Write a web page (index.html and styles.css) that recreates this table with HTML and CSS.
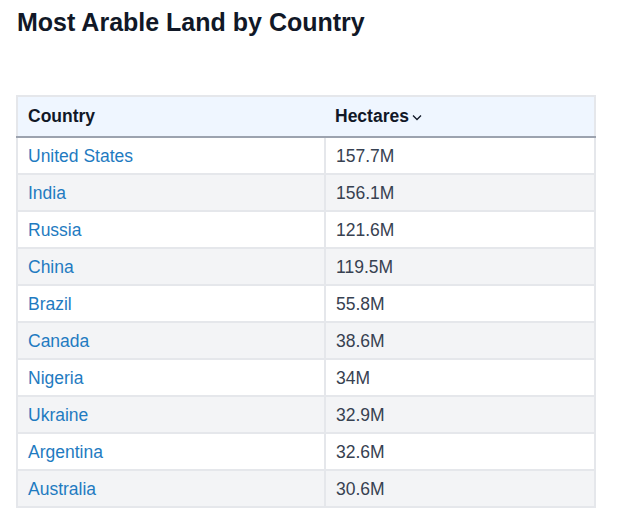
FILE: index.html
```html
<!DOCTYPE html>
<html>
<head>
<meta charset="utf-8">
<link rel="stylesheet" href="styles.css">
</head>
<body>
<div class="page">
  <h1 class="title">Most Arable Land by Country</h1>
  <table class="data">
    <thead>
      <tr>
        <th class="col-country">Country</th>
        <th class="col-value"><span class="sort">Hectares<svg class="chev" width="10" height="7" viewBox="0 0 10 7"><path d="M1 1.5 L5 5.5 L9 1.5" fill="none" stroke="#111827" stroke-width="1.3"/></svg></span></th>
      </tr>
    </thead>
    <tbody>
      <tr><td><a href="#">United States</a></td><td>157.7M</td></tr>
      <tr><td><a href="#">India</a></td><td>156.1M</td></tr>
      <tr><td><a href="#">Russia</a></td><td>121.6M</td></tr>
      <tr><td><a href="#">China</a></td><td>119.5M</td></tr>
      <tr><td><a href="#">Brazil</a></td><td>55.8M</td></tr>
      <tr><td><a href="#">Canada</a></td><td>38.6M</td></tr>
      <tr><td><a href="#">Nigeria</a></td><td>34M</td></tr>
      <tr><td><a href="#">Ukraine</a></td><td>32.9M</td></tr>
      <tr><td><a href="#">Argentina</a></td><td>32.6M</td></tr>
      <tr><td><a href="#">Australia</a></td><td>30.6M</td></tr>
    </tbody>
  </table>
</div>
</body>
</html>
```
FILE: styles.css
```css
html, body { margin: 0; padding: 0; background: #ffffff; }
body { font-family: "Liberation Sans", Arial, sans-serif; color: #374151; }
.page { padding: 6px 16px 0 16px; }
.title {
  margin: 0;
  font-size: 25px;
  line-height: 32px;
  font-weight: 700;
  color: #111827;
  padding-left: 1px;
}
.data {
  margin-top: 57px;
  width: 580px;
  border-collapse: collapse;
  border: 2px solid #e5e7eb;
  font-size: 17.5px;
}
.data th {
  background: #eff6ff;
  text-align: left;
  font-weight: 700;
  color: #111827;
  padding: 10px 10px;
  line-height: 19px;
  border-bottom: 2px solid #9ca3af;
}
.data th.col-country { width: 287px; }
.data td {
  padding: 9px 10px 7px 10px;
  line-height: 19px;
  border: 2px solid #e5e7eb;
}
.data tbody tr:nth-child(even) td { background: #f3f4f6; }
.data a { color: #1f7bc1; text-decoration: none; }
.sort { display: inline-flex; align-items: center; gap: 3px; }
.chev { display: block; margin-top: 1px; }
```
